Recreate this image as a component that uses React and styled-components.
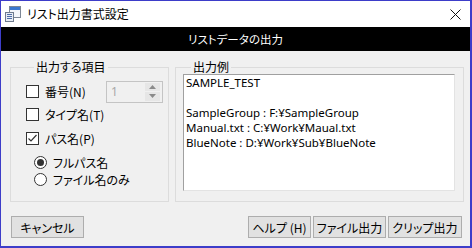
import styled, { createGlobalStyle } from "styled-components";

const GlobalStyle = createGlobalStyle`
  html, body {
    margin: 0;
    padding: 0;
    background: #f0f0f0;
  }
  * {
    box-sizing: border-box;
  }
`;

const jp = `"Noto Sans CJK JP", "Noto Sans", sans-serif`;

const Window = styled.div`
  width: 472px;
  height: 248px;
  display: flex;
  flex-direction: column;
  background: #f0f0f0;
  border-style: solid;
  border-color: #3d3dc9;
  border-width: 1px 2px 2px 1px;
  font-family: ${jp};
  font-feature-settings: "palt";
  font-size: 12px;
  color: #000;
`;

const TitleBar = styled.div`
  height: 26px;
  flex: none;
  display: flex;
  align-items: center;
  background: #fff;
  padding: 0 9px 0 4px;
`;

const Title = styled.div`
  flex: 1;
  margin-left: 6px;
  font-size: 12px;
  line-height: 14px;
  color: #000;
`;

const Banner = styled.div`
  height: 24px;
  flex: none;
  display: flex;
  align-items: center;
  justify-content: center;
  background: #000;
  color: #fff;
  font-size: 11.5px;
`;

const Content = styled.div`
  display: flex;
  gap: 6px;
  padding: 9px 6px 0 9px;
  height: 151px;
`;

const Group = styled.fieldset`
  margin: 0;
  width: ${(p) => p.$width}px;
  border: 1px solid #dcdcdc;
  padding: ${(p) => p.$pad};
  display: flex;
  flex-direction: column;
  min-width: 0;
`;

const Legend = styled.legend`
  margin-left: 8px;
  padding: 0 2px;
  font-size: 12px;
  line-height: 14px;
`;

const Row = styled.div`
  display: flex;
  align-items: center;
  height: ${(p) => p.$h}px;
`;

const CheckLabel = styled.label`
  display: flex;
  align-items: center;
  gap: 6px;
  width: ${(p) => (p.$w ? `${p.$w}px` : "auto")};
  line-height: 14px;
`;

const Box = styled.span`
  width: 13px;
  height: 13px;
  flex: none;
  border: 1px solid #333;
  background: #fff;
  display: flex;
  align-items: center;
  justify-content: center;
`;

const Spin = styled.div`
  width: 57px;
  height: 22px;
  border: 1px solid #c4c4c4;
  background: #f0f0f0;
  display: flex;
  align-items: center;
  padding: 0 2px 0 4px;
`;

const SpinValue = styled.span`
  flex: 1;
  color: #a8a8a8;
  font-family: "Noto Sans", sans-serif;
  font-size: 12px;
`;

const SpinButtons = styled.div`
  width: 15px;
  height: 18px;
  display: flex;
  flex-direction: column;
  gap: 1px;
`;

const SpinButton = styled.div`
  flex: 1;
  background: #e6e6e6;
  display: flex;
  align-items: center;
  justify-content: center;
`;

const Radios = styled.div`
  margin-top: 4px;
  padding-left: 8px;
  display: flex;
  flex-direction: column;
`;

const Radio = styled.span`
  width: 13px;
  height: 13px;
  flex: none;
  border-radius: 50%;
  border: 1px solid #333;
  background: #fff;
  display: flex;
  align-items: center;
  justify-content: center;
  &::after {
    content: "";
    width: 7px;
    height: 7px;
    border-radius: 50%;
    background: ${(p) => (p.$on ? "#333" : "transparent")};
  }
`;

const Preview = styled.div`
  flex: 1;
  background: #fff;
  border-style: solid;
  border-width: 1px;
  border-color: #a0a0a0 #e3e3e3 #e3e3e3 #a0a0a0;
  padding: 0 2px;
  white-space: pre;
  font-family: "Noto Sans", "Noto Sans CJK JP", sans-serif;
  font-feature-settings: normal;
  font-size: 11.5px;
  line-height: 15px;
  overflow: hidden;
`;

const Footer = styled.div`
  display: flex;
  align-items: center;
  gap: 2px;
  padding: 14px 8px 0 10px;
`;

const Button = styled.button`
  width: ${(p) => p.$w}px;
  height: 22px;
  padding: 0;
  margin: 0;
  margin-right: ${(p) => (p.$push ? "auto" : "0")};
  background: #e1e1e1;
  border: 1px solid #adadad;
  font-family: ${jp};
  font-feature-settings: "palt";
  font-size: 12px;
  color: #000;
`;

const AppIcon = () => (
  <svg width="16" height="16" viewBox="0 0 16 16">
    <rect x="4.5" y="0.5" width="11" height="11" fill="#f4f6fa" stroke="#7d8796" />
    <rect x="5" y="1" width="10" height="3" fill="#3b78d0" />
    <rect x="0.5" y="6.5" width="8" height="9" fill="#e8ecf4" stroke="#6f7b8e" />
    <rect x="2" y="8" width="5" height="1" fill="#4f6ea8" />
    <rect x="2" y="10" width="5" height="1" fill="#4f6ea8" />
    <rect x="2" y="12" width="5" height="1" fill="#4f6ea8" />
  </svg>
);

const CloseIcon = () => (
  <svg width="11" height="11" viewBox="0 0 11 11">
    <path d="M0.5 0.5 L10.5 10.5 M10.5 0.5 L0.5 10.5" stroke="#111" strokeWidth="1" />
  </svg>
);

const CheckMark = () => (
  <svg width="11" height="11" viewBox="0 0 11 11">
    <polyline points="1.5,5.5 4,8 9.5,2" fill="none" stroke="#333" strokeWidth="1.2" />
  </svg>
);

const Arrow = ({ up }) => (
  <svg width="7" height="4" viewBox="0 0 7 4">
    <polygon points={up ? "0,4 7,4 3.5,0" : "0,0 7,0 3.5,4"} fill="#8a8a8a" />
  </svg>
);

const Check = ({ checked, children, w }) => (
  <CheckLabel $w={w}>
    <Box>{checked && <CheckMark />}</Box>
    {children}
  </CheckLabel>
);

const previewText = `SAMPLE_TEST

SampleGroup : F:¥SampleGroup
Manual.txt : C:¥Work¥Maual.txt
BlueNote : D:¥Work¥Sub¥BlueNote`;

export default function App() {
  return (
    <>
      <GlobalStyle />
      <Window>
        <TitleBar>
          <AppIcon />
          <Title>リスト出力書式設定</Title>
          <CloseIcon />
        </TitleBar>
        <Banner>リストデータの出力</Banner>
        <Content>
          <Group $width={159} $pad="7px 4px 0 15px">
            <Legend>出力する項目</Legend>
            <Row $h={21}>
              <Check w={80}>番号(N)</Check>
              <Spin>
                <SpinValue>1</SpinValue>
                <SpinButtons>
                  <SpinButton>
                    <Arrow up />
                  </SpinButton>
                  <SpinButton>
                    <Arrow />
                  </SpinButton>
                </SpinButtons>
              </Spin>
            </Row>
            <Row $h={25}>
              <Check>タイプ名(T)</Check>
            </Row>
            <Row $h={23}>
              <Check checked>パス名(P)</Check>
            </Row>
            <Radios>
              <Row $h={17}>
                <CheckLabel>
                  <Radio $on />
                  フルパス名
                </CheckLabel>
              </Row>
              <Row $h={17}>
                <CheckLabel>
                  <Radio />
                  ファイル名のみ
                </CheckLabel>
              </Row>
            </Radios>
          </Group>
          <Group $width={289} $pad="0 8px 10px 7px">
            <Legend>出力例</Legend>
            <Preview>{previewText}</Preview>
          </Group>
        </Content>
        <Footer>
          <Button $w={73} $push>
            キャンセル
          </Button>
          <Button $w={63}>ヘルプ (H)</Button>
          <Button $w={73}>ファイル出力</Button>
          <Button $w={74}>クリップ出力</Button>
        </Footer>
      </Window>
    </>
  );
}
